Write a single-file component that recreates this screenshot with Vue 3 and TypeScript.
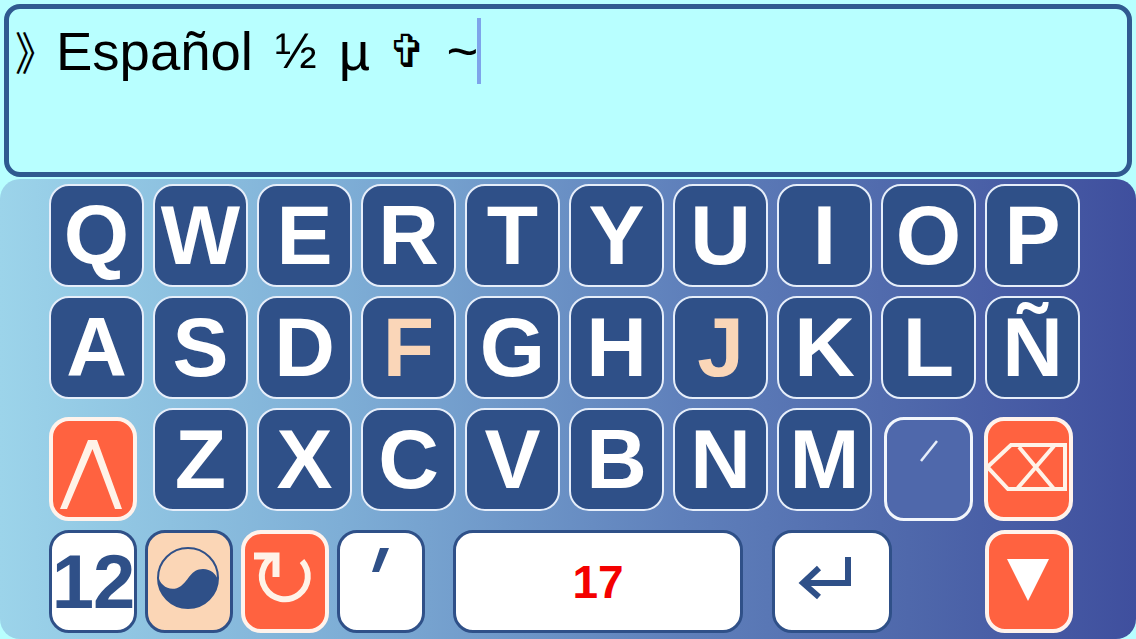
<script setup lang="ts">
const row1: string[] = ['Q', 'W', 'E', 'R', 'T', 'Y', 'U', 'I', 'O', 'P']
const row2: string[] = ['A', 'S', 'D', 'F', 'G', 'H', 'J', 'K', 'L', 'Ñ']
const row3: string[] = ['Z', 'X', 'C', 'V', 'B', 'N', 'M']
const peach: string[] = ['F', 'J']
</script>

<template>
  <div class="screen">
    <div class="input">
      <div class="text">
        <span class="chev">》</span>
        <span>Español</span>
        <span class="half">½</span>
        <span class="mu">µ</span>
        <span class="cross">✞</span>
        <span class="tilde">~</span>
        <span class="caret"></span>
      </div>
    </div>
    <div class="panel">
      <div class="row">
        <div v-for="k in row1" :key="k" class="key">{{ k }}</div>
      </div>
      <div class="row">
        <div v-for="k in row2" :key="k" class="key" :class="{ peach: peach.includes(k) }">{{ k }}</div>
      </div>
      <div class="row row3">
        <div class="tool orange shift">
          <svg viewBox="0 0 88 104" class="ico"><path d="M11 92 39 23H48L73 92H66L43.500 32 18 92Z" fill="#fff3e8" /></svg>
        </div>
        <div class="letters">
          <div v-for="k in row3" :key="k" class="key">{{ k }}</div>
        </div>
        <div class="tool accent shift">
          <svg viewBox="0 0 89 104" class="ico"><path d="M37 44 53 24" fill="none" stroke="#e8eefa" stroke-width="2.500" /></svg>
        </div>
        <div class="tool orange shift backspace">
          <svg viewBox="0 0 89 104" class="ico"><path d="M3.500 50 27 28H81V72H24ZM35 30 70 72M70 29 33 72" fill="none" stroke="#fff3e8" stroke-width="4" /></svg>
        </div>
      </div>
      <div class="row row4">
        <div class="tool white nums">12</div>
        <div class="tool peachbg">
          <svg viewBox="0 0 88 103" class="ico">
            <circle cx="43" cy="48" r="30" fill="none" stroke="#2f5088" stroke-width="2" />
            <path d="M13 46C15 56 26 63 36 56 44 50 46 39 58 39 66 39 71 44 73 50A30 30 0 0 1 13 46Z" fill="#2f5088" />
          </svg>
        </div>
        <div class="tool orange">
          <svg viewBox="0 0 88 103" class="ico">
            <path d="M61 31A23 23 0 1 1 33 26" fill="none" stroke="#fff3e8" stroke-width="6" />
            <path d="M13 26H35V47" fill="none" stroke="#fff3e8" stroke-width="7" />
          </svg>
        </div>
        <div class="tool white">
          <svg viewBox="0 0 88 103" class="ico"><path d="M43 18H52L42 42H35Z" fill="#2f5088" /></svg>
        </div>
        <div class="tool white space">17</div>
        <div class="tool white enter">
          <svg viewBox="0 0 120 103" class="ico"><path d="M76 27V53H31M47 38 31 53 47 67" fill="none" stroke="#2f5088" stroke-width="6" /></svg>
        </div>
        <div class="tool orange down">
          <svg viewBox="0 0 88 103" class="ico"><path d="M22 29H64L43 71Z" fill="#fff" /></svg>
        </div>
      </div>
    </div>
  </div>
</template>

<style>
html, body { margin: 0; background: #b8ffff; }
</style>

<style scoped>
.screen {
  width: 1136px;
  height: 639px;
  overflow: hidden;
  background: #b8ffff;
  box-sizing: border-box;
  padding-top: 4px;
  display: flex;
  flex-direction: column;
  font-family: "Liberation Sans", Arial, sans-serif;
}
.input {
  height: 173px;
  margin: 0 4px;
  box-sizing: border-box;
  border: 5px solid #2f5a90;
  border-radius: 16px;
  background: #b8ffff;
  padding: 9px 0 0 6px;
  flex: none;
}
.text {
  display: flex;
  align-items: center;
  height: 66px;
  font-size: 54.500px;
  color: #000;
  white-space: pre;
}
.chev {
  font-family: "Noto Sans CJK SC", sans-serif;
  font-size: 41px;
  width: 41px;
  transform: scaleY(1.1);
}
.half { font-size: 50px; margin-left: 22px; }
.mu { margin-left: 22px; }
.cross { font-family: "DejaVu Sans", sans-serif; font-size: 46px; margin-left: 18px; }
.tilde { margin-left: 20px; }
.caret { width: 3.500px; height: 66px; background: #7ea4ea; margin-left: -1px; }
.panel {
  flex: 1;
  margin-top: 2px;
  border-radius: 20px;
  background: linear-gradient(90deg, #9cd4ea 0%, #7eaed6 30%, #5f80bb 60%, #4f68ab 80%, #3f4f9e 100%);
  box-sizing: border-box;
  padding: 5px 0 0 49px;
  display: flex;
  flex-direction: column;
  gap: 9px;
}
.row { display: flex; gap: 9px; }
.key {
  width: 95px;
  height: 103px;
  box-sizing: border-box;
  border: 2px solid #e6eefa;
  border-radius: 20px;
  background: #2f5088;
  color: #fff;
  font-weight: 700;
  font-size: 84px;
  display: flex;
  align-items: center;
  justify-content: center;
  flex: none;
}
.key.peach { color: #fad6b8; }
.row3 { height: 113px; gap: 0; }
.letters { display: flex; gap: 9px; margin: 0 12px 0 16px; }
.tool {
  width: 88px;
  height: 103px;
  box-sizing: border-box;
  border-radius: 20px;
  border: 3px solid #2f5088;
  display: flex;
  align-items: center;
  justify-content: center;
  flex: none;
  position: relative;
}
.ico { position: absolute; inset: -3px; width: calc(100% + 6px); height: calc(100% + 6px); }
.shift { height: 104px; align-self: flex-end; }
.orange { background: #ff6240; border: 4px solid #fff3ec; }
.orange .ico { inset: -4px; width: calc(100% + 8px); height: calc(100% + 8px); }
.accent { width: 89px; background: #4f68ab; border: 3px solid #f2f6fc; margin-right: 11px; }
.backspace { width: 89px; }
.white { background: #fff; }
.peachbg { background: #fbd6b6; }
.row4 { gap: 8px; }
.nums { color: #2f5088; font-weight: 700; font-size: 76px; letter-spacing: -1px; }
.space {
  width: 290px;
  margin-left: 20px;
  color: #f40000;
  font-weight: 700;
  font-size: 46px;
}
.enter { width: 120px; margin-left: 21px; }
.down { margin-left: 85px; }
</style>
